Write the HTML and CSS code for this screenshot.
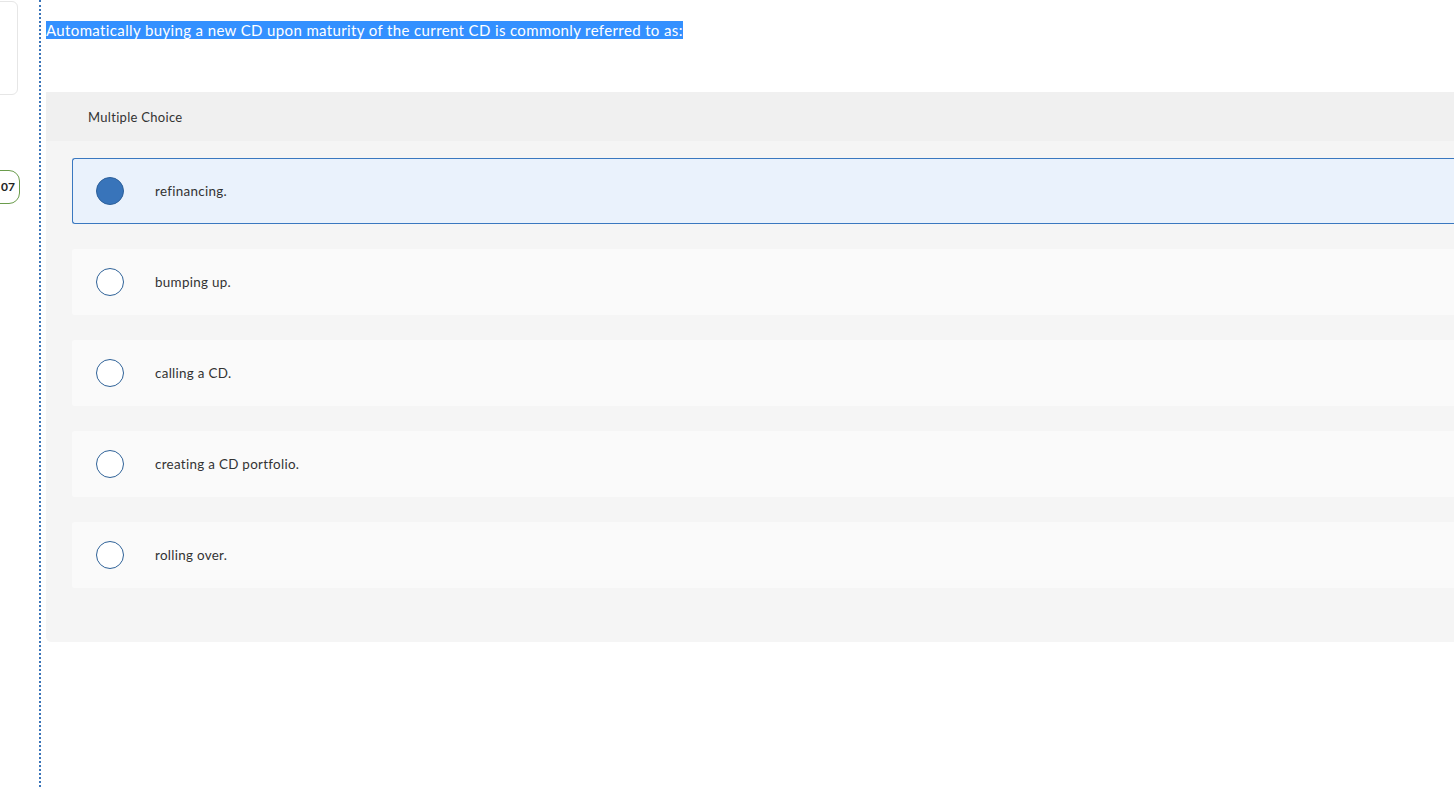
FILE: index.html
```html
<!DOCTYPE html>
<html lang="en">
<head>
<meta charset="utf-8">
<title>Multiple Choice</title>
<link rel="stylesheet" href="styles.css">
</head>
<body>
<div class="page">
  <aside class="sidebar">
    <div class="side-card"></div>
    <div class="badge">07</div>
  </aside>
  <div class="divider"></div>
  <main class="main">
    <p class="question"><span class="sel">Automatically buying a new CD upon maturity of the current CD is commonly referred to as:</span></p>
    <section class="panel">
      <div class="panel-head">Multiple Choice</div>
      <div class="options">
        <div class="option selected"><span class="radio"></span><span class="label">refinancing.</span></div>
        <div class="option"><span class="radio"></span><span class="label">bumping up.</span></div>
        <div class="option"><span class="radio"></span><span class="label">calling a CD.</span></div>
        <div class="option"><span class="radio"></span><span class="label">creating a CD portfolio.</span></div>
        <div class="option"><span class="radio"></span><span class="label">rolling over.</span></div>
      </div>
    </section>
  </main>
</div>
</body>
</html>
```
FILE: styles.css
```css
html, body {
  margin: 0;
  padding: 0;
  background: #ffffff;
  overflow: hidden;
}
body {
  font-family: Lato, "Open Sans", "Liberation Sans", sans-serif;
  color: #333333;
}
.page {
  display: flex;
  height: 787px;
  width: 100%;
}
.sidebar {
  width: 39px;
  flex: none;
  overflow: hidden;
  display: flex;
  flex-direction: column;
}
.side-card {
  margin-left: -30px;
  margin-top: 1px;
  width: 46px;
  height: 92px;
  border: 1px solid #e6e6e6;
  border-radius: 6px;
  background: #fff;
}
.badge {
  margin-left: -16px;
  margin-top: 75px;
  width: 30px;
  height: 32px;
  border: 1px solid #6a9c4c;
  border-radius: 11px;
  font-size: 12px;
  font-weight: 700;
  color: #222;
  display: flex;
  align-items: center;
  justify-content: flex-end;
  padding-right: 4px;
  background: #fff;
  line-height: 1;
}
.divider {
  width: 0;
  flex: none;
  border-left: 2px dotted #3a74b8;
  height: 787px;
}
.main {
  flex: 1;
  min-width: 0;
  padding-left: 5px;
  padding-top: 19px;
}
.question {
  margin: 0;
  font-size: 15px;
  letter-spacing: 0.37px;
  line-height: 23px;
}
.sel {
  background: #3390ff;
  color: #ffffff;
}
.panel {
  margin-top: 50px;
  background: #f5f5f5;
  border-radius: 0 0 0 5px;
  padding-bottom: 54px;
}
.panel-head {
  background: #f0f0f0;
  height: 49px;
  padding-left: 42px;
  display: flex;
  align-items: center;
  font-size: 13px;
  letter-spacing: 0.3px;
}
.options {
  padding: 17px 0 0 26px;
  display: flex;
  flex-direction: column;
  gap: 25px;
}
.option {
  height: 66px;
  box-sizing: border-box;
  background: #fafafa;
  border: 1px solid #fafafa;
  border-right: none;
  border-radius: 3px 0 0 3px;
  display: flex;
  align-items: center;
  padding-left: 23px;
}
.option.selected {
  background: #eaf2fc;
  border-color: #3a78c0;
}
.radio {
  width: 28px;
  height: 28px;
  box-sizing: border-box;
  border-radius: 50%;
  border: 1.5px solid #2f6298;
  background: #ffffff;
  flex: none;
}
.option.selected .radio {
  background: #3874ba;
  border-color: #2d609a;
}
.label {
  margin-left: 31px;
  font-size: 13.4px;
  letter-spacing: 0.3px;
}
```
